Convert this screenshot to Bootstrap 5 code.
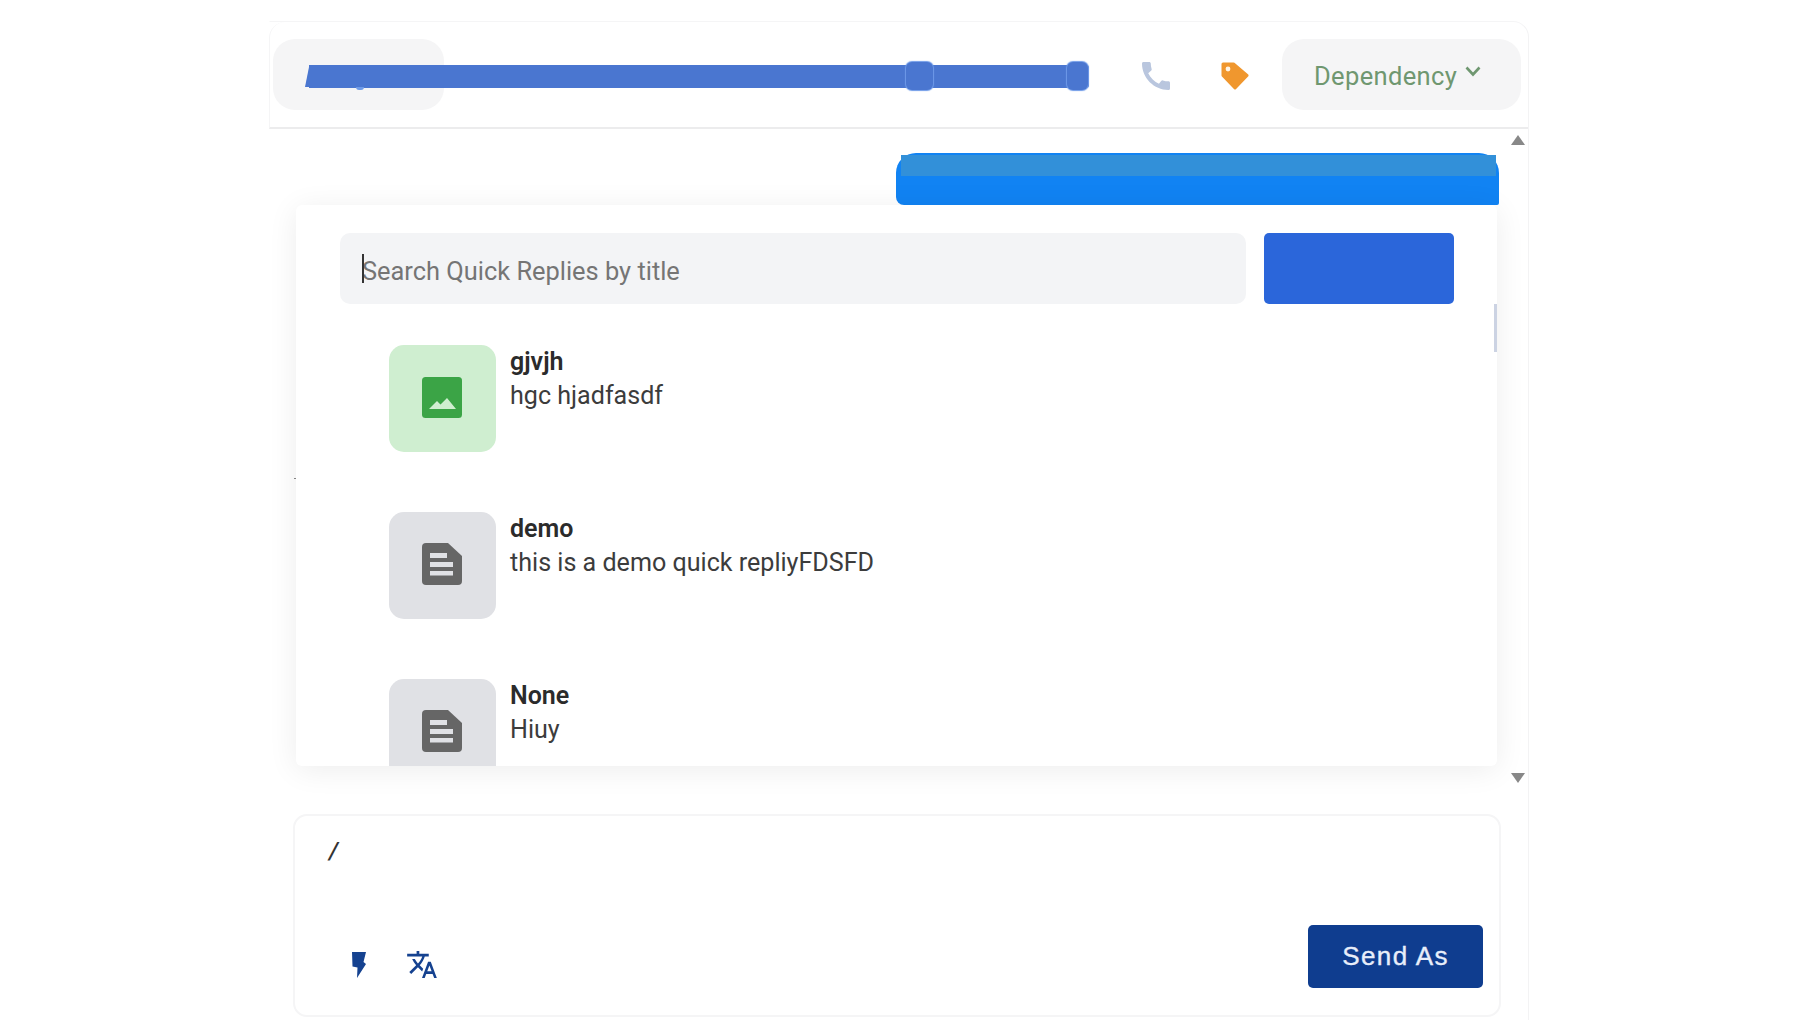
<!doctype html>
<html lang="en">
<head>
<meta charset="utf-8">
<title>Quick replies</title>
<link rel="stylesheet" href="https://cdn.jsdelivr.net/npm/bootstrap@5.3.0/dist/css/bootstrap.min.css">
<style>
html,body{height:100%;overflow:hidden;background:#fff}
body{font-family:"Roboto","Liberation Sans",sans-serif;padding-top:21px}
.chat-shell{margin-left:269px;width:1260px;height:999px;border-top:1px solid #f5f5f6;border-right:1px solid #f3f3f4;border-left:1px solid transparent;border-radius:0 16px 0 0;position:relative}
.chat-head{height:107px;margin-left:-1px;border-bottom:2px solid #ececed;border-left:1px solid #f5f5f6;border-top-left-radius:16px;padding:0 7px 0 3px;position:relative}
.head-pill{height:71px;background:#f5f5f6;border-radius:22px}
.pill-name{width:171px}
.pill-dep{width:239px;color:#6f9770;font-size:25.500px;letter-spacing:.35px;padding:3px 0 0 32px;gap:8px}
.dep-chevron{margin-top:-9px}
.ic-phone{margin-right:51px;margin-top:2px}
.ic-tag{margin-right:33px;margin-top:2px}
.redact-bar{position:absolute;left:39px;top:43px;width:780px;height:23px;background:#4a76d0;border-radius:0 3px 3px 0}
.redact-bump{position:absolute;top:-3px;height:28px;background:#4a76d0;box-shadow:0 0 1px 1px #6f9be8;border-radius:6px}
.bump-a{left:597px;width:27px}
.bump-b{left:758px;width:21px}
.redact-wedge{position:absolute;left:-4px;top:2px;width:0;height:0;border-bottom:20px solid #4a76d0;border-left:4px solid transparent}
.redact-blob{position:absolute;left:47px;top:22px;width:8px;height:3px;background:#6f9be8;border-radius:0 0 4px 4px}
.chat-main{height:685px;position:relative;padding:24px 0 0 626px}
.bubble{width:603px;height:52px;background:#1183f3;border-radius:20px 20px 2px 8px;padding:2px 3px 0 5px}
.bubble-band{height:21px;background:#3290d9}
.scroll-track{position:absolute;left:1241px;top:6px;bottom:31px;width:14px}
.arrow-up{width:0;height:0;border-left:7px solid transparent;border-right:7px solid transparent;border-bottom:10px solid #888}
.arrow-down{width:0;height:0;border-left:7px solid transparent;border-right:7px solid transparent;border-top:10px solid #888}
.qr-panel{position:absolute;left:26px;top:76px;width:1201px;height:561px;background:#fff;border-radius:6px;box-shadow:0 4px 30px rgba(0,0,0,.075);overflow:hidden}
.qr-search{padding:28px 0 0 44px;gap:18px}
.qr-inputwrap{width:906px;position:relative}
.qr-input{height:71px;background:#f3f4f6;border:0;border-radius:10px;padding:4px 0 0 22px;font-size:25.400px;color:#333}
.qr-input::placeholder{color:#757575;opacity:1}
.qr-caret{position:absolute;left:22px;top:21px;width:2px;height:29px;background:#333}
.qr-go{width:190px;height:71px;background:#2b66da;border:0;border-radius:5px}
.qr-list{padding:41px 0 0 93px}
.qr-item{height:167px;gap:14px}
.qr-tile{width:107px;height:107px;border-radius:15px;flex:none;padding:0 2px 3px 0}
.tile-img{background:#cfeed0}
.tile-doc{background:#e0e1e5}
.qr-title{font-size:25px;line-height:33px;font-weight:600;color:#2b2b2b}
.qr-desc{font-size:25.100px;line-height:33px;padding-top:1px;color:#3c3c3c}
.qr-thumb{position:absolute;right:0;top:99px;width:3px;height:48px;background:#ccd3e3}
.stray-dot{position:absolute;left:24px;top:349px;width:2px;height:1px;background:#888}
.composer{margin-left:23px;width:1208px;height:203px;border:2px solid #f5f5f6;border-radius:14px;padding:18px 16px 27px 0}
.slash{font-size:24px;line-height:34px;padding-left:34px;font-style:italic;font-weight:500;color:#333}
.tool-icons{padding:0 0 10px 57px;gap:41px}
.send-btn{width:175px;height:63px;background:#0f3d8f;color:#e8eefa;border:0;border-radius:5px;font-family:"Liberation Sans",sans-serif;font-size:26px;letter-spacing:1.4px;-webkit-text-stroke:.35px #e8eefa;padding:0}
.send-btn:hover{background:#0f3d8f;color:#e8eefa}
</style>
</head>
<body>
<div class="chat-shell d-flex flex-column">
  <header class="chat-head d-flex align-items-center">
    <div class="head-pill pill-name"></div>
    <svg class="ic-phone ms-auto" width="28" height="28" viewBox="3 3 18 18" aria-hidden="true"><path fill="#b9c6de" d="M20.01 15.38c-1.23 0-2.42-.2-3.53-.56a.977.977 0 0 0-1.01.24l-1.57 1.97c-2.83-1.35-5.48-3.9-6.89-6.83l1.95-1.66c.27-.28.35-.67.24-1.02-.37-1.11-.56-2.3-.56-3.53 0-.54-.45-.99-.99-.99H4.19C3.65 3 3 3.24 3 3.99 3 13.28 10.73 21 20.01 21c.71 0 .99-.63.99-1.18v-3.45c0-.54-.45-.99-.99-.99z"/></svg>
    <svg class="ic-tag" width="28" height="28" viewBox="0 0 28 28" aria-hidden="true"><path fill="#f0972e" stroke="#f0972e" stroke-width="3" stroke-linejoin="round" d="M2 2H12.5L26 13.5 14 26 2 13.5Z"/><circle cx="7" cy="7" r="2.4" fill="#fff5e6"/></svg>
    <div class="head-pill pill-dep d-flex align-items-center">
      <span>Dependency</span>
      <svg class="dep-chevron" width="16" height="11" viewBox="0 0 16 11" aria-hidden="true"><path d="M1.5 1.5 8 8.5l6.5-7" fill="none" stroke="#6f9770" stroke-width="2.6"/></svg>
    </div>
    <div class="redact-bar"><div class="redact-wedge"></div><div class="redact-blob"></div><div class="redact-bump bump-a"></div><div class="redact-bump bump-b"></div></div>
  </header>

  <section class="chat-main">
    <div class="bubble"><div class="bubble-band"></div></div>
    <div class="scroll-track d-flex flex-column justify-content-between align-items-center">
      <div class="arrow-up"></div><div class="arrow-down"></div>
    </div>
    <div class="stray-dot"></div>
    <div class="qr-panel">
      <div class="qr-search d-flex">
        <div class="qr-inputwrap">
          <input class="form-control qr-input" type="text" placeholder="Search Quick Replies by title">
          <span class="qr-caret"></span>
        </div>
        <button class="btn qr-go" type="button" aria-label="Search"></button>
      </div>
      <div class="qr-list">
        <div class="qr-item d-flex">
          <div class="qr-tile tile-img d-flex align-items-center justify-content-center">
            <svg width="40" height="41" viewBox="0 0 40 41" aria-hidden="true"><rect width="40" height="41" rx="3.5" fill="#3ba446"/><path fill="#cfeed0" d="M7 32 15 24l3.5 3.500L25 21l9 11Z"/></svg>
          </div>
          <div><div class="qr-title">gjvjh</div><div class="qr-desc">hgc hjadfasdf</div></div>
        </div>
        <div class="qr-item d-flex">
          <div class="qr-tile tile-doc d-flex align-items-center justify-content-center">
            <svg width="40" height="42" viewBox="0 0 40 42" aria-hidden="true"><path fill="#666" d="M4 0H26L40 13V38a4 4 0 0 1-4 4H4a4 4 0 0 1-4-4V4a4 4 0 0 1 4-4Z"/><path fill="#e0e1e5" d="M8 10H25V15H8ZM8 19H31V24H8ZM8 28H31V32.500H8Z"/></svg>
          </div>
          <div><div class="qr-title">demo</div><div class="qr-desc">this is a demo quick repliyFDSFD</div></div>
        </div>
        <div class="qr-item d-flex">
          <div class="qr-tile tile-doc d-flex align-items-center justify-content-center">
            <svg width="40" height="42" viewBox="0 0 40 42" aria-hidden="true"><path fill="#666" d="M4 0H26L40 13V38a4 4 0 0 1-4 4H4a4 4 0 0 1-4-4V4a4 4 0 0 1 4-4Z"/><path fill="#e0e1e5" d="M8 10H25V15H8ZM8 19H31V24H8ZM8 28H31V32.500H8Z"/></svg>
          </div>
          <div><div class="qr-title">None</div><div class="qr-desc">Hiuy</div></div>
        </div>
      </div>
      <div class="qr-thumb"></div>
    </div>
  </section>

  <section class="composer d-flex flex-column justify-content-between">
    <div class="slash">/</div>
    <div class="d-flex justify-content-between align-items-end">
      <div class="tool-icons d-flex align-items-center">
        <svg width="14" height="26" viewBox="0 0 14 26" aria-hidden="true"><path fill="#154290" d="M0 0H14L11.500 10 14 12 5 26 5.500 15.500 .5 14.500Z"/></svg>
        <svg width="30" height="27" viewBox="1 2 22 20" aria-hidden="true"><path fill="#154290" d="M12.870 15.070l-2.540-2.510.03-.03c1.740-1.940 2.980-4.170 3.710-6.530H17V4h-7V2H8v2H1v1.990h11.170C11.500 7.920 10.440 9.750 9 11.350 8.070 10.320 7.300 9.190 6.690 8h-2c.73 1.630 1.730 3.170 2.980 4.560l-5.090 5.020L4 19l5-5 3.110 3.110.76-2.040zM18.500 10h-2L12 22h2l1.120-3h4.750L21 22h2l-4.500-12zm-2.620 7l1.620-4.330L19.120 17h-3.240z"/></svg>
      </div>
      <button class="btn send-btn" type="button">Send As</button>
    </div>
  </section>
</div>
<script src="https://cdn.jsdelivr.net/npm/bootstrap@5.3.0/dist/js/bootstrap.bundle.min.js"></script>
</body>
</html>
